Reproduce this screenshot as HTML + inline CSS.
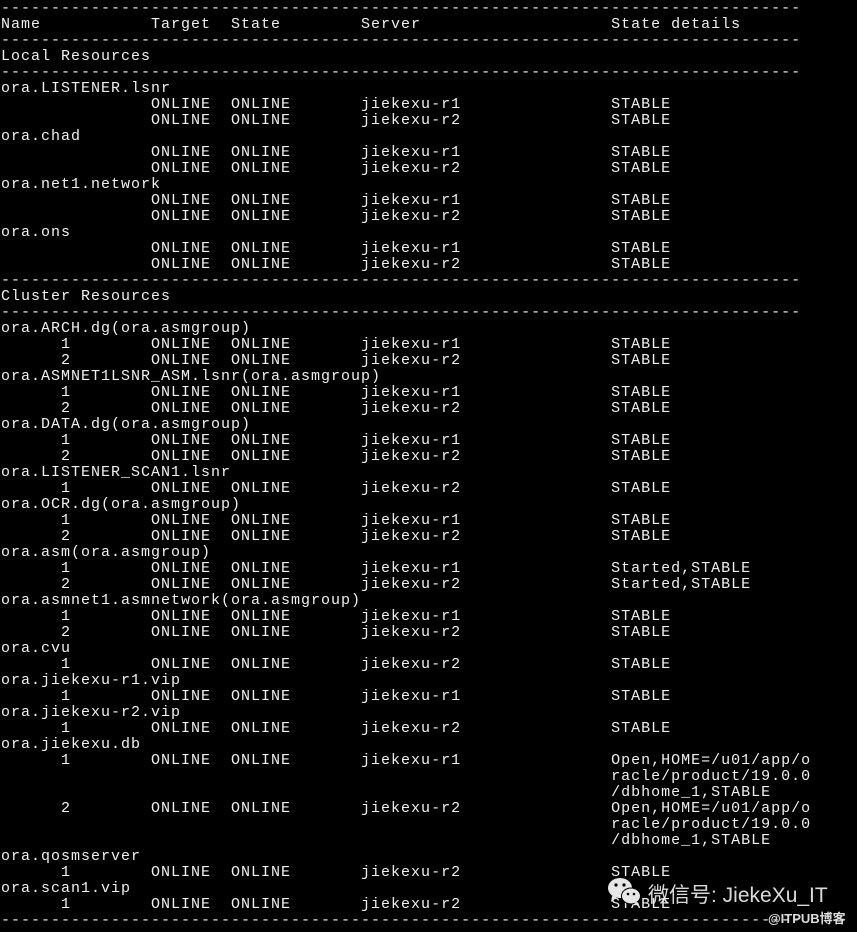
<!DOCTYPE html>
<html><head><meta charset="utf-8"><style>
html,body{margin:0;padding:0;background:#000;width:857px;height:932px;overflow:hidden}
pre{margin:0;position:absolute;left:1px;top:1px;color:#f0f0f0;font-family:"Liberation Mono",monospace;font-size:15px;letter-spacing:1px;line-height:16px;}
.wm{position:absolute;left:648px;top:879px;font-family:"Liberation Sans","Noto Sans CJK SC",sans-serif;font-size:21px;color:rgba(235,235,235,0.92);white-space:nowrap}
.wm2{position:absolute;left:768px;top:908px;font-family:"Liberation Sans","Noto Sans CJK SC",sans-serif;font-size:13px;font-weight:bold;color:#ddd;white-space:nowrap}
</style></head><body>
<pre>--------------------------------------------------------------------------------
Name           Target  State        Server                   State details
--------------------------------------------------------------------------------
Local Resources
--------------------------------------------------------------------------------
ora.LISTENER.lsnr
               ONLINE  ONLINE       jiekexu-r1               STABLE
               ONLINE  ONLINE       jiekexu-r2               STABLE
ora.chad
               ONLINE  ONLINE       jiekexu-r1               STABLE
               ONLINE  ONLINE       jiekexu-r2               STABLE
ora.net1.network
               ONLINE  ONLINE       jiekexu-r1               STABLE
               ONLINE  ONLINE       jiekexu-r2               STABLE
ora.ons
               ONLINE  ONLINE       jiekexu-r1               STABLE
               ONLINE  ONLINE       jiekexu-r2               STABLE
--------------------------------------------------------------------------------
Cluster Resources
--------------------------------------------------------------------------------
ora.ARCH.dg(ora.asmgroup)
      1        ONLINE  ONLINE       jiekexu-r1               STABLE
      2        ONLINE  ONLINE       jiekexu-r2               STABLE
ora.ASMNET1LSNR_ASM.lsnr(ora.asmgroup)
      1        ONLINE  ONLINE       jiekexu-r1               STABLE
      2        ONLINE  ONLINE       jiekexu-r2               STABLE
ora.DATA.dg(ora.asmgroup)
      1        ONLINE  ONLINE       jiekexu-r1               STABLE
      2        ONLINE  ONLINE       jiekexu-r2               STABLE
ora.LISTENER_SCAN1.lsnr
      1        ONLINE  ONLINE       jiekexu-r2               STABLE
ora.OCR.dg(ora.asmgroup)
      1        ONLINE  ONLINE       jiekexu-r1               STABLE
      2        ONLINE  ONLINE       jiekexu-r2               STABLE
ora.asm(ora.asmgroup)
      1        ONLINE  ONLINE       jiekexu-r1               Started,STABLE
      2        ONLINE  ONLINE       jiekexu-r2               Started,STABLE
ora.asmnet1.asmnetwork(ora.asmgroup)
      1        ONLINE  ONLINE       jiekexu-r1               STABLE
      2        ONLINE  ONLINE       jiekexu-r2               STABLE
ora.cvu
      1        ONLINE  ONLINE       jiekexu-r2               STABLE
ora.jiekexu-r1.vip
      1        ONLINE  ONLINE       jiekexu-r1               STABLE
ora.jiekexu-r2.vip
      1        ONLINE  ONLINE       jiekexu-r2               STABLE
ora.jiekexu.db
      1        ONLINE  ONLINE       jiekexu-r1               Open,HOME=/u01/app/o
                                                             racle/product/19.0.0
                                                             /dbhome_1,STABLE
      2        ONLINE  ONLINE       jiekexu-r2               Open,HOME=/u01/app/o
                                                             racle/product/19.0.0
                                                             /dbhome_1,STABLE
ora.qosmserver
      1        ONLINE  ONLINE       jiekexu-r2               STABLE
ora.scan1.vip
      1        ONLINE  ONLINE       jiekexu-r2               STABLE
--------------------------------------------------------------------------------</pre>
<svg style="position:absolute;left:606px;top:876px" width="38" height="32" viewBox="0 0 38 32">
<ellipse cx="14" cy="12" rx="12" ry="10" fill="#e6e6e6"/>
<path d="M6 20 L5 26 L11 21 Z" fill="#e6e6e6"/>
<circle cx="10" cy="9" r="1.6" fill="#000"/><circle cx="18" cy="9" r="1.6" fill="#000"/>
<ellipse cx="25" cy="20" rx="10" ry="8.5" fill="#000"/>
<ellipse cx="25" cy="20" rx="9" ry="7.5" fill="#e6e6e6"/>
<path d="M31 26 L33 31 L28 27 Z" fill="#e6e6e6"/>
<circle cx="22" cy="18" r="1.3" fill="#000"/><circle cx="28" cy="18" r="1.3" fill="#000"/>
</svg>
<div class="wm">微信号: JiekeXu_IT</div>
<div class="wm2">@ITPUB博客</div>
</body></html>
